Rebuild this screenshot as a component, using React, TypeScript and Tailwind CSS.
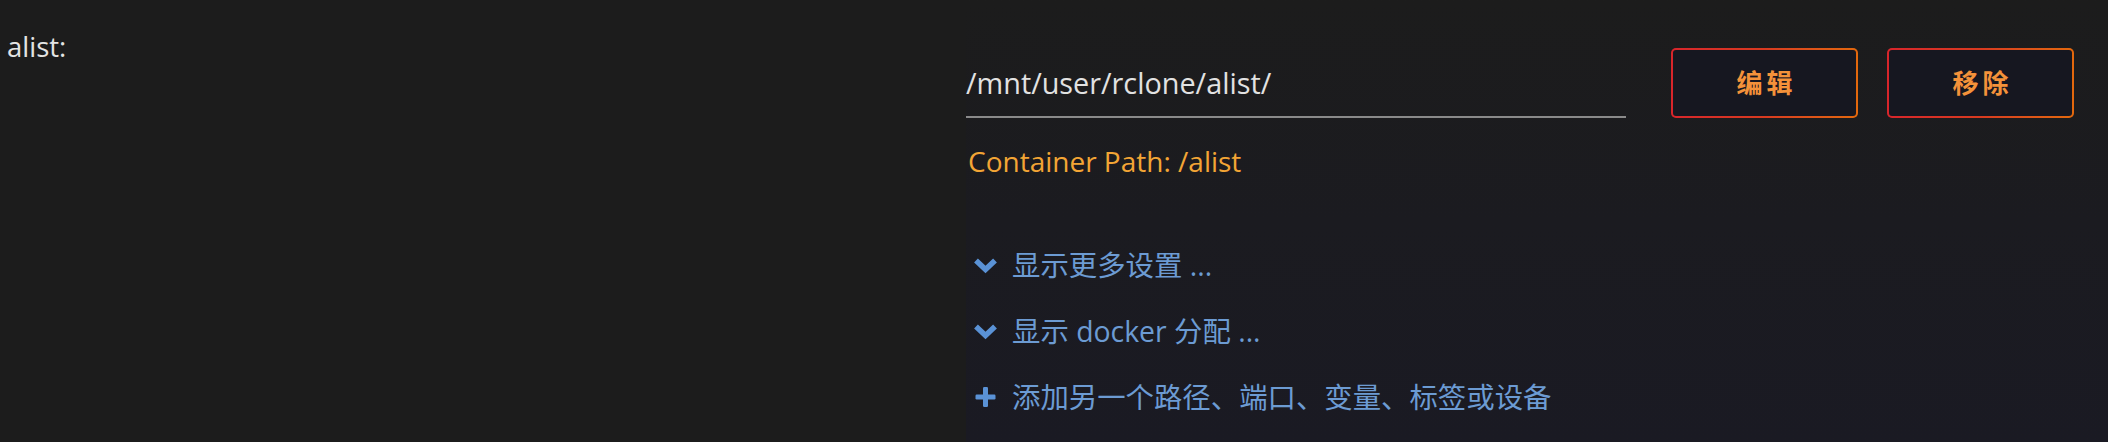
const FONT = "font-['Open_Sans','Noto_Sans_CJK_SC',sans-serif]";

function ChevronDown() {
  return (
    <svg width="25" height="17" viewBox="0 0 25 17" className="shrink-0">
      <polyline
        points="3,3.5 12.5,12.5 22,3.5"
        fill="none"
        stroke="#5a92d6"
        strokeWidth="5.5"
        strokeLinejoin="miter"
      />
    </svg>
  );
}

function Plus() {
  return (
    <svg width="25" height="20" viewBox="0 0 25 20" className="shrink-0">
      <rect x="10" y="0" width="5" height="20" rx="1.2" fill="#5a92d6" />
      <rect x="2.5" y="7.5" width="20" height="5" rx="1.2" fill="#5a92d6" />
    </svg>
  );
}

function ActionButton({ label }: { label: string }) {
  return (
    <div className="h-[70px] w-[187px] rounded-[5px] bg-gradient-to-r from-[#d8252b] via-[#d83a20] to-[#e3680c] p-[2px]">
      <div className="flex h-full w-full items-center justify-center rounded-[3px] bg-[#161720]">
        <span className="pl-[4px] text-[26px] font-bold tracking-[4px] text-[#f4923a]">{label}</span>
      </div>
    </div>
  );
}

function LinkRow({ icon, text }: { icon: React.ReactNode; text: string }) {
  return (
    <div className="flex h-[40px] items-center gap-[14px] pl-[7px] text-[28.4px] leading-[40px] text-[#6c9bd3]">
      {icon}
      <span>{text}</span>
    </div>
  );
}

export default function App() {
  return (
    <div className={`flex h-[442px] w-full bg-[#1c1c1c] ${FONT}`}>
      {/* label column */}
      <div className="w-[966px] shrink-0 pl-[7px] pt-[27px] text-[27.5px] leading-[40px] text-[#e4e4e4]">
        alist:
      </div>

      {/* value column */}
      <div className="flex-1 bg-gradient-to-b from-[#1c1c1c] via-[#1b1b20] to-[#1a1a23]">
        <div className="flex items-start pt-[48px]">
          <div className="mt-[15px] w-[660px] border-b-2 border-[#8a8a8a] pb-[13px] text-[28.8px] leading-[40px] text-[#e2e2e2]">
            /mnt/user/rclone/alist/
          </div>
          <div className="ml-[45px] flex gap-[29px]">
            <ActionButton label="编辑" />
            <ActionButton label="移除" />
          </div>
        </div>

        <div className="mt-[23px] pl-[2px] text-[28px] leading-[40px] text-[#f3a535]">
          Container Path: /alist
        </div>

        <div className="mt-[64px] flex flex-col gap-[26px]">
          <LinkRow icon={<ChevronDown />} text="显示更多设置 ..." />
          <LinkRow icon={<ChevronDown />} text="显示 docker 分配 ..." />
          <LinkRow icon={<Plus />} text="添加另一个路径、端口、变量、标签或设备" />
        </div>
      </div>
    </div>
  );
}
